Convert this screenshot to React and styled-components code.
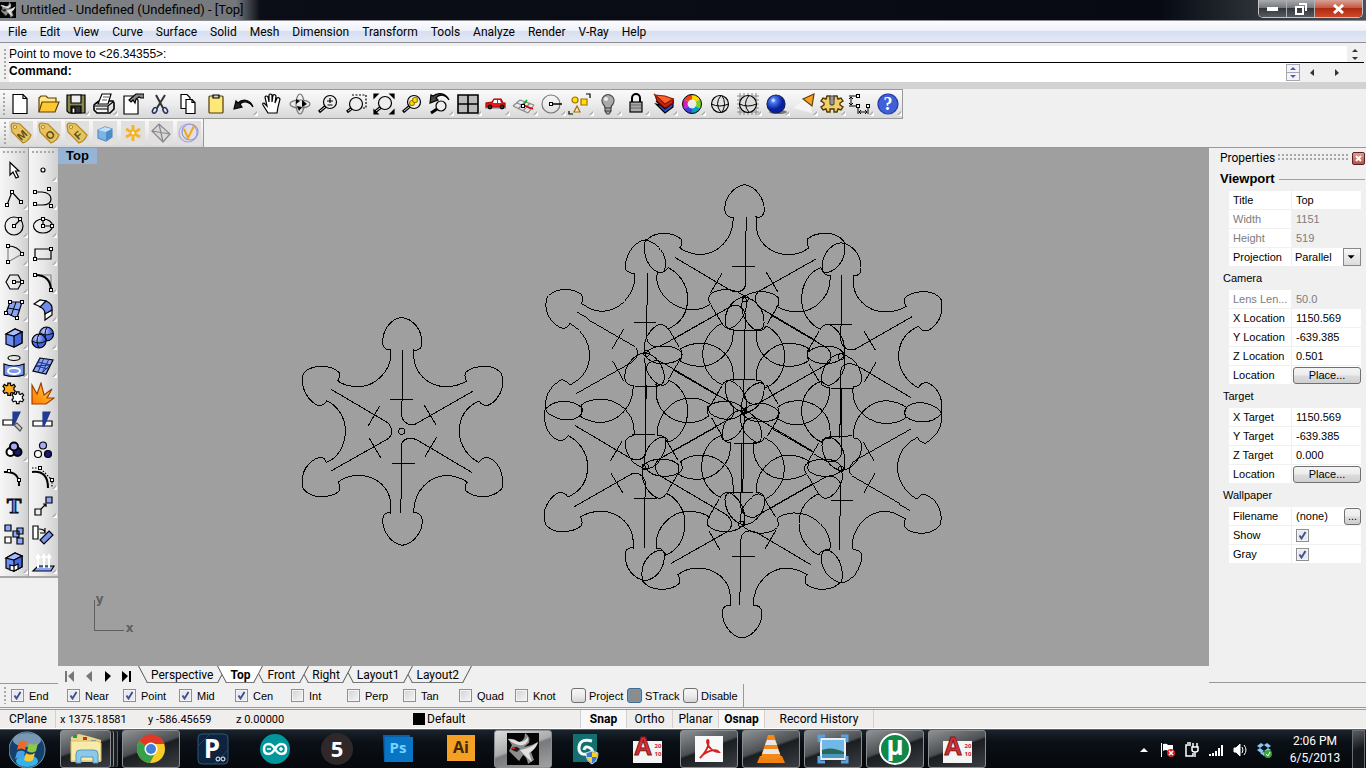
import React from "react";
import styled, { createGlobalStyle, css } from "styled-components";

const GlobalStyle = createGlobalStyle`
  * {
    box-sizing: border-box;
  }
  body {
    margin: 0;
    background: #f0f0f0;
    color: #000;
    font-family: Roboto, "Liberation Sans", sans-serif;
    font-size: 12px;
    line-height: 16px;
  }
  button,
  input,
  select {
    font: inherit;
    color: inherit;
    margin: 0;
    padding: 0;
    border: 0;
    background: none;
  }
`;

const Window = styled.div`
  display: flex;
  flex-direction: column;
  min-height: 100vh;
`;

/* ---------- title bar and menu ---------- */

const TitleBar = styled.header`
  display: flex;
  align-items: flex-start;
  justify-content: space-between;
  height: 21px;
  border-bottom: 1px solid #8d8d93;
  background: linear-gradient(90deg, #4b4e52 0, #0b0e16 260px, #070a12 85%, #2c3238 92%, #4a5056);
`;

const WindowTitle = styled.h1`
  display: flex;
  align-items: center;
  gap: 5px;
  height: 20px;
  margin: 0;
  padding-right: 16px;
  font-size: 13px;
  font-weight: 400;
  background: linear-gradient(90deg, #85888c, #75787b calc(100% - 24px), #0b0e1600);
  white-space: nowrap;
`;

const WindowButtons = styled.div`
  display: flex;
  height: 18px;
  margin-right: 3px;
  border: 1px solid #c4c4c8;
  border-top: 0;
  border-radius: 0 0 5px 5px;
  overflow: hidden;
`;

const WindowButton = styled.button`
  display: flex;
  align-items: center;
  justify-content: center;
  width: ${(p) => (p.$close ? "47px" : "28px")};
  border-right: ${(p) => (p.$close ? "0" : "1px solid #b0b0b4")};
  background: ${(p) =>
    p.$close
      ? "linear-gradient(#d8a196, #c45a45 45%, #b02a10 50%, #d0482a)"
      : "linear-gradient(#a9abae, #75787c 45%, #33373c 50%, #565b61)"};
`;

const Menu = styled.nav`
  display: flex;
  gap: 13px;
  height: 22px;
  padding: 3px 8px 0;
  border-bottom: 1px solid #8e8e94;
  background: linear-gradient(#fbfcfe, #eef1f9 45%, #d8dff0 50%, #e3e8f5);
  button {
    line-height: 16px;
    height: 16px;
  }
`;

/* ---------- command prompt ---------- */

const Grip = styled.span`
  flex: none;
  ${(p) =>
    p.$across
      ? css`
          height: ${p.$tall ? "8px" : "4px"};
          flex: 1;
        `
      : css`
          width: 3px;
          align-self: stretch;
          margin: 3px 2px 3px 4px;
        `}
  background: radial-gradient(circle at 1px 1px, #a8a8a8 1px, transparent 1px);
  background-size: 4px 4px;
`;

const CommandArea = styled.section`
  display: flex;
  padding-top: 3px;
  border-bottom: 7px solid #d2d2d2;
  font-family: "Liberation Sans", Arial, sans-serif;
`;

const CommandLines = styled.div`
  flex: 1;
  padding-right: 2px;
`;

const CommandHistory = styled.div`
  display: flex;
  justify-content: space-between;
  height: 17px;
  border-bottom: 1px solid #000;
  background: #fff;
`;

const CommandInput = styled.label`
  display: flex;
  height: 19px;
  background: #fff;
  font-weight: 700;
  input {
    flex: 1;
    outline: 0;
    font-weight: 400;
  }
`;

const ScrollBox = styled.span`
  display: flex;
  flex-direction: ${(p) => (p.$row ? "row" : "column")};
  align-items: center;
  justify-content: space-around;
  width: ${(p) => p.$width};
  background: #f0f0f0;
`;

const Spinner = styled.span`
  display: flex;
  flex-direction: column;
  width: 14px;
  margin: 1px 0;
  border: 1px solid #a6a6b0;
  svg {
    flex: 1;
    min-height: 0;
    background: #f4f4f8;
  }
  svg + svg {
    border-top: 1px solid #a6a6b0;
  }
`;

/* ---------- tool bars ---------- */

const ToolRow = styled.div`
  display: flex;
  height: ${(p) => (p.$small ? "29px" : "30px")};
  border-bottom: ${(p) => (p.$small ? "1px solid #999" : "0")};
`;

const ToolBar = styled.div`
  display: flex;
  border-top: ${(p) => (p.$small ? "0" : "1px solid #999")};
  border-bottom: ${(p) => (p.$small ? "0" : "1px solid #999")};
  border-right: 1px solid #999;
  background: linear-gradient(#fafafa, #ececec 50%, #d8d8d8);
  > ${Grip} {
    margin-left: ${(p) => (p.$small ? "4px" : "3px")};
    margin-right: 0;
  }
`;

const Tool = styled.button`
  position: relative;
  display: flex;
  align-items: center;
  justify-content: center;
  width: 28px;
  height: 28px;
  svg {
    display: block;
  }
  ${(p) =>
    p.$flyout &&
    css`
      &::after {
        content: "";
        position: absolute;
        right: 0;
        bottom: 2px;
        border: 2px solid transparent;
        border-right-color: #fff;
        border-bottom-color: #fff;
        filter: drop-shadow(-1px -1px 0 #aaa);
      }
    `}
  ${(p) =>
    p.$plate &&
    css`
      &::before {
        content: "";
        position: absolute;
        inset: 2px;
        background: #e2dfdf;
      }
      svg {
        position: relative;
      }
    `}
`;

/* ---------- main area ---------- */

const Main = styled.main`
  display: flex;
  flex: 1;
`;

const Side = styled.aside`
  display: flex;
  flex: none;
  align-items: flex-start;
  border-bottom: 1px solid #999;
`;

const Palette = styled.div`
  width: 29px;
  padding-top: 3px;
  border-bottom: 2px solid #a8a8a8;
  border-right: ${(p) => (p.$divider ? "1px solid #999" : "0")};
  background: linear-gradient(90deg, #f6f6f6, #e8e8e8 50%, #d0d0d0);
  ${Grip} {
    display: block;
    margin: 0 3px 1px;
  }
`;

const Centre = styled.div`
  display: flex;
  flex: 1;
  flex-direction: column;
  min-width: 0;
`;

const Viewport = styled.section`
  position: relative;
  flex: 1;
  min-height: 400px;
  background: #9f9f9f;
  > svg {
    display: block;
    width: 100%;
    height: 100%;
  }
`;

const ViewportName = styled.h2`
  position: absolute;
  top: 0;
  left: 0;
  margin: 0;
  padding: 0 8px;
  background: #98b4d4;
  font: 700 13px/16px "Liberation Sans", Arial, sans-serif;
`;

const Tabs = styled.div`
  display: flex;
  height: 18px;
  padding-left: 2px;
`;

const TabArrow = styled.button`
  width: 19px;
  height: 18px;
  svg {
    display: block;
    margin: 2px auto 0;
  }
`;

const TabList = styled.div`
  display: flex;
  padding-left: 2px;
`;

const Tab = styled.button`
  position: relative;
  z-index: ${(p) => p.$z};
  height: 17px;
  margin-right: -9px;
  padding: 0 13px;
  line-height: 16px;
  font-weight: ${(p) => (p.$active ? 700 : 400)};
  &::before,
  &::after {
    content: "";
    position: absolute;
    z-index: -1;
    top: 0;
    bottom: 0;
    background: ${(p) => (p.$active ? "#fff" : "#f0f0f0")};
    border-bottom: 1px solid #777;
  }
  &::before {
    left: 0;
    right: 45%;
    border-left: 1px solid #555;
    transform: skewX(28deg);
    transform-origin: top;
  }
  &::after {
    left: 45%;
    right: 0;
    border-right: 1px solid #555;
    transform: skewX(-28deg);
    transform-origin: top;
  }
`;

/* ---------- properties panel ---------- */

const Panel = styled.aside`
  flex: none;
  width: 157px;
  margin-bottom: 1px;
  padding: 0 1px 0 11px;
  border-bottom: 1px solid #999;
  font-family: "Liberation Sans", Arial, sans-serif;
  font-size: 11px;
`;

const PanelHeader = styled.div`
  display: flex;
  align-items: center;
  gap: 3px;
  height: 20px;
  font-size: 12px;
  font-family: Roboto, "Liberation Sans", sans-serif;
`;

const CloseButton = styled.button`
  width: 13px;
  height: 13px;
  border: 1px solid #5e2020;
  border-radius: 2px;
  background: linear-gradient(#dca090, #b85050);
  svg {
    display: block;
    margin: 2px auto;
  }
`;

const PanelTitle = styled.h2`
  display: flex;
  align-items: center;
  gap: 4px;
  margin: 0;
  height: 22px;
  font-size: 13px;
  &::after {
    content: "";
    flex: 1;
    height: 1px;
    background: #a0a0a0;
  }
`;

const Fields = styled.div`
  display: flex;
  flex-direction: column;
  gap: 1px;
  padding-top: 1px;
`;

const GroupName = styled.h3`
  margin: 0;
  height: 22px;
  padding-left: 3px;
  font-size: 11px;
  font-weight: 400;
  line-height: 22px;
`;

const Field = styled.div`
  display: grid;
  grid-template-columns: 62px 1fr;
  gap: 1px;
  height: 18px;
  margin: 0 4px 0 9px;
  line-height: 18px;
  color: ${(p) => (p.$off ? "#7c7c7c" : "#000")};
  > label {
    padding-left: 4px;
    background: #fff;
    white-space: nowrap;
  }
`;

const Value = styled.div`
  display: flex;
  align-items: center;
  min-width: 0;
  background: ${(p) => (p.$off ? "#f0f0f0" : "#fff")};
  > input[type="text"] {
    flex: 1;
    min-width: 0;
    width: 100%;
    height: 18px;
    padding-left: 4px;
    color: inherit;
  }
`;

const Projection = styled.div`
  position: relative;
  width: 100%;
  select {
    width: 100%;
    height: 18px;
    padding-left: 3px;
    appearance: none;
  }
  svg {
    position: absolute;
    top: 0;
    right: 0;
    pointer-events: none;
    border: 1px solid #888;
    background: linear-gradient(#f8f8f8, #dcdcdc);
  }
`;

const PushButton = styled.button`
  flex: ${(p) => (p.$small ? "0 0 17px" : "1")};
  height: 17px;
  margin-left: ${(p) => (p.$small ? "0" : "1px")};
  border: 1px solid #707070;
  border-radius: 3px;
  background: linear-gradient(#f4f4f4, #ececec 48%, #dcdcdc 52%, #cfcfcf);
  line-height: 14px;
`;

const Check = styled.input`
  flex: none;
  appearance: none;
  width: 13px;
  height: 13px;
  margin: ${(p) => (p.$inset ? "0 0 0 4px" : "0")};
  border: 1px solid #8e8f8f;
  background: linear-gradient(135deg, #cfd2d6, #f6f6f6);
  box-shadow: inset 0 0 0 1px #f4f4f4;
  &:checked {
    background: url("data:image/svg+xml,%3Csvg xmlns='http://www.w3.org/2000/svg' viewBox='0 0 11 11'%3E%3Cpath d='M2.5 5.5l2 3L8.500 2' fill='none' stroke='%23405090' stroke-width='1.900'/%3E%3C/svg%3E")
      #e8eaee;
  }
`;

/* ---------- osnap and status bars ---------- */

const Osnap = styled.div`
  display: flex;
  height: 24px;
  border-bottom: 1px solid #999;
  font-family: "Liberation Sans", Arial, sans-serif;
  font-size: 11px;
`;

const OsnapItems = styled.div`
  display: flex;
  padding-left: 2px;
  padding-right: 4px;
  border-right: 1px solid #999;
`;

const OsnapItem = styled.label`
  display: flex;
  align-items: center;
  gap: ${(p) => (p.$big ? "3px" : "5px")};
  width: 56px;
  white-space: nowrap;
`;

const PushCheck = styled.input`
  flex: none;
  appearance: none;
  width: 15px;
  height: 15px;
  border: 1px solid #707070;
  border-radius: 3px;
  background: linear-gradient(#f6f6f6, #ececec 50%, #d4d4d4);
  &:checked {
    border-color: #3c6a90;
    box-shadow: inset 0 0 0 1px #6c9cc0;
    background: #8c8c8c;
  }
`;

const Status = styled.footer`
  display: flex;
  height: 20px;
  margin-top: 1px;
  border-top: 1px solid #999;
  border-bottom: 1px solid #fff;
  background: #f0eded;
  line-height: 19px;
  white-space: nowrap;
`;

const StatusCell = styled.span`
  width: ${(p) => p.$width};
  padding-left: ${(p) => p.$pad || "0"};
  border-right: ${(p) => (p.$line ? "1px solid #d4d0d0" : "0")};
  font-size: ${(p) => (p.$digits ? "11px" : "12px")};
`;

const LayerCell = styled.span`
  display: flex;
  flex: none;
  align-items: center;
  gap: 2px;
  width: 168px;
  border-right: 1px solid #d4d0d0;
  &::before {
    content: "";
    width: 12px;
    height: 12px;
    background: #000;
  }
`;

const StatusButton = styled.button`
  width: ${(p) => (p.$wide ? "109px" : "46px")};
  border-right: 1px solid #d4d0d0;
  font-weight: ${(p) => (p.$on ? 700 : 400)};
  background: ${(p) => (p.$on ? "#f8f8f8" : "none")};
`;

/* ---------- task bar ---------- */

const TaskBar = styled.nav`
  display: flex;
  align-items: stretch;
  height: 40px;
  border-top: 1px solid #56626c;
  background: linear-gradient(#1a232c, #0a1016 12px, #05080c);
`;

const StartButton = styled.button`
  width: 56px;
  svg {
    display: block;
    margin: 0 auto;
  }
`;

const TaskButtons = styled.div`
  display: flex;
  flex: 1;
  gap: 4px;
  padding-left: 4px;
`;

const frames = {
  open: "linear-gradient(160deg, #8f9294, #4c5053 45%, #1a1e21 50%, #3a3e42)",
  active: "linear-gradient(160deg, #dcdddd, #a9abac 45%, #77797b 50%, #a0a2a4)",
};

const TaskButton = styled.button`
  display: flex;
  align-items: center;
  justify-content: center;
  width: 58px;
  height: 38px;
  border: 1px solid ${(p) => (p.$frame ? "#8a8e92" : "transparent")};
  border-radius: 3px;
  background: ${(p) => frames[p.$frame] || "none"};
  ${(p) =>
    p.$stack &&
    css`
      width: 51px;
      margin-right: 7px;
      box-shadow: 3px 0 0 -1px #1a1e21, 4px 0 0 -1px #8a8e92, 7px 0 0 -1px #1a1e21, 8px 0 0 -1px #5a5e62;
    `}
`;

const Tray = styled.div`
  display: flex;
  align-items: center;
  gap: 4px;
  color: #fff;
  button {
    width: 20px;
    height: 20px;
  }
  svg {
    display: block;
    margin: auto;
  }
`;

const Clock = styled.time`
  width: 74px;
  text-align: center;
  line-height: 17px;
  white-space: pre-line;
`;

const ShowDesktop = styled.button`
  width: 13px;
  margin-right: 1px;
  border: 1px solid #6a6e72;
  background: linear-gradient(160deg, #5a5e62, #14181c 50%);
`;

/* ---------- drawings ---------- */

const Svg = ({ size = 24, children }) => (
  <svg width={size} height={size} viewBox="0 0 24 24" fill="none" stroke="#000" strokeWidth="1.2" aria-hidden="true">
    {children}
  </svg>
);

const Nodes = ({ at }) =>
  at.map(([x, y]) => (
    <rect key={x + "-" + y} x={x - 1.5} y={y - 1.5} width="3" height="3" fill="#fff" stroke="#000" strokeWidth="1" shapeRendering="crispEdges" />
  ));

const Tag = ({ letter }) => (
  <Svg>
    <path d="M2 5Q2 2 5 2L11 3L22 14Q20 20 14 22L3 11Z" fill="#e8c25c" stroke="#b08a28" />
    <circle cx="6" cy="6" r="1.500" fill="#fff" stroke="#b08a28" />
    <text x="13" y="18" fontSize="11" fontWeight="700" fontFamily="Liberation Sans, sans-serif" textAnchor="middle" fill="#5c4c1c" stroke="none" transform="rotate(-42 13 14)">
      {letter}
    </text>
  </Svg>
);

const Glass = ({ x = 14, y = 10 }) => (
  <>
    <path d={`M${x - 4} ${y + 4}L3 20`} strokeWidth="3" />
    <path d={`M${x - 5} ${y + 5}L4 19`} stroke="#ddd" strokeWidth="1" />
    <circle cx={x} cy={y} r="6.500" fill="#eee" />
  </>
);

const gear =
  "M10 3h4v3l2 1 3-2 2 3-2 2v3l2 2-2 3-3-1-2 1v3h-4v-3l-2-1-3 1-2-3 2-2v-3l-2-2 2-3 3 2 2-1z";

const cog =
  "M7 4h3v3h4V4h3l1 3 3-1 2 3-3 2v2l3 2-2 3-3-1-1 3h-3v-3h-4v3H7l-1-3-3 1-2-3 3-2v-2L1 9l2-3 3 1z";

const Cube = () => (
  <>
    <path d="M4 8L13 3L20 6L20 17L12 21L4 18Z" fill="#6f8ff4" />
    <path d="M4 8L13 3L20 6L12 10Z" fill="#a9bcff" />
    <path d="M12 10V21L20 17V6Z" fill="#4668d8" />
  </>
);

const standardTools = [
  ["New", 0, <><path d="M5 2.500h10l4 4v15H5z" fill="#fff" /><path d="M15 2.500v4h4" /></>],
  ["Open", 0, <><path d="M3 20V6l2-2h5l2 2h8v4" fill="#ffe88a" stroke="#5c4000" /><path d="M3 20L6 10h17l-4 10z" fill="#ffc832" stroke="#5c4000" /></>],
  ["Save", 1, <><path d="M3 3h18v18H5l-2-2z" fill="#8a8650" /><path d="M7 3h10v8H7z" fill="#eee" /><path d="M7 14h10v7H7z" fill="#333" /><path d="M8 16h3v5H8z" fill="#fff" /></>],
  ["Print", 1, <><path d="M3 12l4-3h14l1 2v6l-4 4H5l-3-3v-5z" fill="#e4e4e4" strokeWidth="1.600" /><path d="M6 12l4-10h9l-3 10z" fill="#fff" /><path d="M11 5h6M10 8h5" stroke="#555" /><path d="M3 14h13l5-4M16 14v6M4 17h12" /><path d="M5 19h10" stroke="#fff" /></>],
  ["Document Properties", 0, <><path d="M4 4h9l5 4v14H4z" fill="#fff" /><path d="M9 8l7-6h8v4h-3l-2-1-3 2-1 4-2-3-2 2z" fill="#888" /></>],
  ["Cut", 0, <><path d="M8 3l7 13M17 3l-8 13" strokeWidth="2" stroke="#333" /><ellipse cx="7" cy="18.500" rx="2" ry="3" stroke="#203060" strokeWidth="1.500" transform="rotate(30 7 18)" /><ellipse cx="17" cy="18.500" rx="2" ry="3" stroke="#203060" strokeWidth="1.500" transform="rotate(-30 17 18)" /></>],
  ["Copy", 0, <><path d="M5 2.500h6l3 3v11H5z" fill="#fff" /><path d="M10 7.500h6l3 3v11h-9z" fill="#fff" /><path d="M16 7.500v3h3" /></>],
  ["Paste", 0, <><rect x="5" y="4" width="14" height="17" rx="1" fill="#ffe878" stroke="#4a3c10" /><path d="M9 6V3h6v3z" fill="#ccc" /></>],
  ["Undo", 1, <path d="M21 15C18 10 12 8 8 12L10 15L2 17L4 9L6 11C11 6 19 8 21 15Z" fill="#222" />],
  ["Pan", 0, <path d="M8 21L3 13Q2 11 4 11L7 14L5 5Q6 3 8 5L9 10V3Q10 1 12 3V10L13 3Q15 2 16 4L15 11L17 6Q19 5 20 7L18 15L17 21Z" fill="#fff" />],
  ["Rotate View", 0, <><ellipse cx="12" cy="12" rx="10" ry="4" stroke="#777" /><ellipse cx="12" cy="12" rx="4" ry="10" stroke="#777" /><path d="M8 7l4 2-4 3zM14 8l5 4-5 3zM9 14l5 1-3 4z" fill="#000" stroke="none" /></>],
  ["Zoom Dynamic", 0, <><Glass /><path d="M11 9h6M14 6v5M11.500 13h5" /></>],
  ["Zoom Window", 0, <><path d="M8 3h14v13h-5" strokeDasharray="2 1.500" /><Glass x={12} y={12} /></>],
  ["Zoom Extents", 0, <><Glass x={13} y={11} /><path d="M2 6V2h4zM18 2h4v4zM22 18v4h-4zM2 18v4h4z" fill="#000" /></>],
  ["Zoom Selected", 0, <><Glass /><circle cx="12" cy="11" r="2.500" fill="#ffe000" stroke="#a08000" /><circle cx="15" cy="8" r="2.500" fill="#ffe000" stroke="#a08000" /></>],
  ["Undo View", 1, <><path d="M9 17l-6 4" strokeWidth="3" /><circle cx="13" cy="14" r="5" fill="#eee" /><path d="M21 8C17 2 11 2 8 6L10 8L2 11L3 3L5 4C10 0 18 1 21 8Z" fill="#444" /></>],
  ["Four Viewports", 1, <><path d="M2 3h20v18H2z" fill="#bbb" strokeWidth="1.600" /><path d="M12 3v18M2 12h20" strokeWidth="1.600" /></>],
  ["Right View", 1, <><path d="M1 16h21" stroke="#888" /><path d="M2 15v-4l6-1 2-3h7l2 4h2v4z" fill="#e81818" stroke="#a00" /><path d="M10 8h3v3H9zM14 8h2l1 3h-3z" fill="#fff" stroke="none" /><circle cx="6" cy="15" r="1.800" fill="#333" /><circle cx="18" cy="15" r="1.800" fill="#333" /></>],
  ["CPlane", 1, <><path d="M8 8L22 13M5 11l14 6M1 14l15 7M8 8l-7 6M13 10l-7 7M18 11l-7 8M22 13l-6 8" stroke="#888" /><path d="M11 13l10 4" stroke="#d00" strokeWidth="1.600" /><path d="M11 13l4-5" stroke="#0a0" strokeWidth="1.600" /><Nodes at={[[11, 14]]} /></>],
  ["Circle", 1, <><circle cx="11" cy="12" r="9" stroke="#777" /><path d="M12 12h10" strokeWidth="1.500" /><Nodes at={[[11, 12]]} /></>],
  ["Object Snap", 1, <><circle cx="7" cy="8" r="3" fill="#ffe000" stroke="#a07000" /><path d="M13 7h6v6h-6z" fill="#ffe000" stroke="#a07000" /><path d="M9 14l3 6H6z" fill="#ffe8c8" stroke="#a07000" /><path d="M18 2h4v4M1 19v3h4" /></>],
  ["Lights", 1, <><path d="M9 16Q9 14 7 12A6 6 0 1 1 17 12Q15 14 15 16V19L13 22H11L9 19Z" fill="#aaa" stroke="#444" /><path d="M9 16h6M9 19h6" stroke="#333" /><circle cx="10" cy="7" r="2" fill="#eee" stroke="none" /></>],
  ["Lock", 1, <><path d="M8 11V6a4 4 0 0 1 8 0v5" strokeWidth="2" /><rect x="6" y="10" width="12" height="10" fill="#aaa" /><path d="M7 13h10M7 16h10" stroke="#666" /></>],
  ["Layers", 1, <><path d="M4 12l9 9 8-6V9l-8 5z" fill="#2850c8" /><path d="M4 9l9 8 8-6V8l-8 5z" fill="#fff" /><path d="M3 3l10 9 8-5v4l-8 5-8-7z" fill="#d82010" stroke="#701000" /><path d="M3 3l10 1 8 3-8 5z" fill="#ff6030" stroke="#902000" /></>],
  ["Colour", 1, <g strokeWidth="5"><path d="M12 5A7 7 0 0 1 18 8.500" stroke="#ffd800" /><path d="M18 8.500A7 7 0 0 1 18 15.500" stroke="#80d020" /><path d="M18 15.500A7 7 0 0 1 12 19" stroke="#00a0c0" /><path d="M12 19A7 7 0 0 1 6 15.500" stroke="#4040e0" /><path d="M6 15.500A7 7 0 0 1 6 8.500" stroke="#d020c0" /><path d="M6 8.500A7 7 0 0 1 12 5" stroke="#f04018" /><circle cx="12" cy="12" r="9.500" strokeWidth="1" /></g>],
  ["Shade", 0, <><circle cx="12" cy="12" r="8.500" fill="#e4e4e4" /><path d="M3.500 12q8 4 17 0M13 3.500q-7 8 0 17M14 3.500q5 8 0 17" strokeWidth="1" /></>],
  ["Mesh Shade", 1, <><path d="M1 4h22M1 8h22M1 12h22M1 16h22M1 20h22M4 1v22M8 1v22M12 1v22M16 1v22M20 1v22" stroke="#888" strokeWidth="1" /><circle cx="12" cy="12" r="8.500" fill="#ddd" /><path d="M3.500 12q8 4 17 0M13 3.500q-7 8 0 17" strokeWidth="1" /></>],
  ["Render", 1, <><ellipse cx="14" cy="20" rx="9" ry="2" fill="#777" stroke="none" /><circle cx="12" cy="12" r="9" fill="url(#blueBall)" stroke="#102060" /></>],
  ["Spotlight", 1, <><path d="M1 16L16 4L20 21Z" fill="#f4f4f4" stroke="none" /><path d="M11 7L22 2L20 14Z" fill="#f8a020" stroke="#604000" /></>],
  ["Options", 1, <><path d={cog} fill="#f4cc68" stroke="#503800" strokeWidth="1.400" /><path d="M10 4v8q2 2 4 0V4z" fill="#999" stroke="#555" /></>],
  ["Dimension", 1, <><path d="M1 4h9M1 14h9M3 5v8M1 7l2-2 2 2M1 11l2 2 2-2M10 14v8M20 14v8M11 20h8M13 18l-2 2 2 2M17 18l2 2-2 2" strokeWidth="1" /><Nodes at={[[10, 4], [10, 14], [20, 14]]} /></>],
  ["Help", 1, <><circle cx="12" cy="12" r="10" fill="#4060d8" stroke="#2038a0" /><text x="12" y="18" fontSize="18" fontWeight="700" fontFamily="Liberation Serif, serif" textAnchor="middle" fill="#fff" stroke="none">?</text></>],
];

const vrayTools = [
  ["V-Ray Materials", <Tag letter="M" />],
  ["V-Ray Options", <Tag letter="O" />],
  ["V-Ray Frame", <Tag letter="F" />],
  ["V-Ray Proxy", <Svg><path d="M5 9l7-3 7 2v8l-6 4-8-3z" fill="#7cb4e4" stroke="#5890c4" /><path d="M5 9l7-3 7 2-6 3z" fill="#c0e0f8" stroke="none" /><path d="M13 11v9l6-4V8z" fill="#4c8cc8" stroke="none" /></Svg>],
  ["V-Ray Sun", <Svg><path d="M12 4v16M5 8l14 8M19 8L5 16" stroke="#f4b428" strokeWidth="3" /><circle cx="12" cy="12" r="2" fill="#fff" stroke="#f4b428" /></Svg>],
  ["V-Ray Plane", <Svg><path d="M3 10L10 3L21 13L14 21ZM3 10L21 13M10 3L14 21" fill="#d8d8d8" stroke="#888" /></Svg>],
  ["V-Ray", <Svg><circle cx="11" cy="12" r="9" stroke="#a8a8e8" /><circle cx="13" cy="11" r="8" stroke="#9090e0" /><path d="M7 8l4 9 6-12" stroke="#f0a818" strokeWidth="2" /></Svg>],
];

const leftTools = [
  ["Select", 0, <path d="M8 4.500V17l3-3 3 6 2.500-1-3-6H17z" fill="#fff" />],
  ["Polyline", 1, <><path d="M5 19L10 6L19 16" /><Nodes at={[[5, 19], [10, 6], [19, 16]]} /></>],
  ["Circle", 1, <><circle cx="12" cy="12" r="9" /><path d="M12 12l6-6" /><Nodes at={[[12, 12], [18, 5]]} /></>],
  ["Arc", 1, <><path d="M6 4v16L20 12" stroke="#888" /><path d="M6 4Q16 4 20 12" /><Nodes at={[[6, 4], [20, 12], [6, 20]]} /></>],
  ["Polygon", 1, <><path d="M8 5h8l4 7-4 7H8l-4-7z" /><path d="M12 12h8" /><Nodes at={[[12, 12], [20, 12]]} /></>],
  ["Surface", 1, <><path d="M8 4h12l-5 16-11-5z" fill="#8aa4f4" /><path d="M14 4L9 18M6 10l11 2" strokeWidth="1" /><Nodes at={[[8, 4], [20, 4], [4, 15], [15, 20]]} /></>],
  ["Box", 1, <Cube />],
  ["Project", 1, <><ellipse cx="12" cy="4" rx="6" ry="2.500" /><path d="M2 10q10 4 20 0v11q-10 3-20 0z" fill="#7c98f0" /><ellipse cx="12" cy="17" rx="6" ry="3" stroke="#fff" strokeWidth="2" /></>],
  ["Join", 0, <><g transform="translate(-1 -1) scale(.68)"><path d={gear} fill="#ffa818" strokeWidth="1.800" /></g><g transform="translate(8 8) scale(.65)"><path d={gear} fill="#fff" strokeWidth="1.800" /></g></>],
  ["Trim", 0, <><path d="M1 10h10v5H1z" fill="#fff" /><path d="M11 2h7L12 15h-1z" fill="#203c90" stroke="#203c90" /><path d="M12 15l3-2 5 5-2 3z" fill="#ccc" stroke="#555" /></>],
  ["Group", 1, <g strokeWidth="2"><circle cx="8.500" cy="14" r="4" fill="#fff" /><circle cx="15.500" cy="14" r="4" fill="#181878" /><circle cx="12" cy="8.500" r="4" fill="#a8a8ff" /></g>],
  ["Edit Curve", 0, <><path d="M2 6Q18 5 17 20" strokeWidth="2" /><Nodes at={[[7, 5], [17, 14]]} /></>],
  ["Text", 0, <text x="12" y="19" fontSize="22" fontWeight="700" fontFamily="Liberation Serif, serif" textAnchor="middle" fill="#6484e8" strokeWidth="1">T</text>],
  ["Block", 0, <g fill="#8ca8f8"><path d="M3 3h6v6H3zM15 6h6v6h-6zM11 9h6v6h-6zM15 16h6v6h-6z" /><path d="M3 15h6v6H3z" fill="#fff" /></g>],
  ["Boolean", 1, <><Cube /><path d="M8 15l4 1v5l-4-1zM12 16l4-2v5l-4 2z" fill="#fff" /></>],
];

const rightTools = [
  ["Point", 1, <circle cx="12" cy="12" r="2" fill="#fff" />],
  ["Curve", 1, <><path d="M4 6h7q9 1 9 7t-9 6H4" /><Nodes at={[[4, 6], [18, 3], [4, 18], [20, 20]]} /></>],
  ["Ellipse", 1, <><ellipse cx="12" cy="12" rx="9.500" ry="7" /><path d="M12 5v7h9" /><Nodes at={[[12, 5], [12, 12], [21, 12]]} /></>],
  ["Rectangle", 1, <><path d="M4 7h16v10H4z" /><Nodes at={[[20, 7], [4, 17]]} /></>],
  ["Fillet", 1, <><path d="M4 5h16v16" stroke="#888" /><path d="M4 5q16 0 16 16" strokeWidth="2" /><Nodes at={[[4, 5], [20, 20]]} /></>],
  ["Fillet Surface", 1, <><path d="M3 6l6-4 6 1-5 6z" fill="#fff" /><path d="M14 15l7-3v5l-7 5z" fill="#fff" /><path d="M9 9l6-6q7 3 6 9l-7 4q0-5-5-7z" fill="#6c8cf0" /></>],
  ["Solids", 1, <><circle cx="15.500" cy="8" r="7" fill="url(#softBall)" /><circle cx="8" cy="15" r="7" fill="url(#softBall)" /><path d="M1 15q7 4 14 0M8 8q-4 7 0 14M9 7q6 4 13 0M16 1q-4 7 0 14" strokeWidth="1" /></>],
  ["Mesh", 1, <><path d="M9 4l13 2-7 14-13-3z" fill="#88a4f4" /><path d="M13 4L7 18M18 5l-7 14M7 8l12 3M5 12l12 3M9 4l-4 8 14-1-8 8" stroke="#203080" strokeWidth="1" /></>],
  ["Explode", 0, <path d="M1 22V3l5 9 4-11 3 12 8-6-5 9h7l-8 6z" fill="url(#fire)" stroke="#a04000" />],
  ["Split", 0, <><path d="M2 11h19v5H2z" fill="#fff" /><path d="M12 2h7l-6 14h-1z" fill="#203c90" stroke="#203c90" /></>],
  ["Ungroup", 0, <><circle cx="12" cy="7.500" r="3.500" fill="#a8a8ff" /><circle cx="7" cy="16" r="3.500" fill="#fff" /><circle cx="17" cy="16" r="3.500" fill="#181878" /></>],
  ["Control Points", 1, <><path d="M1 6q16-2 16 16" strokeWidth="2" /><path d="M1 2h8l12 12v8" strokeDasharray="1.500 1.500" /><Nodes at={[[9, 2], [21, 14]]} /></>],
  ["Scale", 1, <><path d="M4 15h6v6H4z" fill="#eee" /><path d="M15 3h6v6h-6z" fill="#8ca8f8" /><path d="M10 15l5-5M12 10h3v3" /></>],
  ["Orient", 0, <><path d="M2 4h5v13H2z" fill="#fff" /><path d="M8 7q5 0 6 3M14 6v5h-5" /><path d="M18 9l4 4-9 9-4-4z" fill="#7894f0" /></>],
  ["Extrude", 1, <><path d="M2 21l5-5h16l-3 5z" fill="#88a4f4" /><path d="M7 18V7M13 18V7M18 18V7M5 8l2-3 2 3M11 8l2-3 2 3M16 8l2-3 2 3" stroke="#fff" strokeWidth="2" /></>],
];

/* One six-armed star, centred on 0,0 and drawn at three units per pixel */
const outline = `M-33-229V-245H-42Q-57-250-57-266C-57-304-35-336 0-342C37-336 60-304 60-269
C61-250 54-243 40-243L36-245V-229C36-179 75-134 135-134C165-134 180-142 195-151
C189-160 189-170 192-177C205-189 225-195 250-195C275-195 290-186 300-172C303-159 303-149 302-132
C295-104 275-82 255-77C243-77 237-84 232-91C195-74 173-44 173 0C173 46 205 81 232 93
C237 84 245 78 257 78C280 84 300 111 302 141Q304 164 300 173C285 188 265 196 245 196
C225 196 205 189 193 179Q189 160 197 152C175 138 160 133 135 132C85 134 36 176 36 244
C50 243 61 251 61 264C65 296 40 336 2 342C-35 336-58 296-57 264C-56 251-48 244-36 244L-32 246
L-33 221C-33 166-80 132-132 132C-160 133-175 140-190 152C-186 159-185 171-187 179
C-200 191-220 196-240 196C-265 196-285 186-296 171C-299 156-298 136-295 126
C-287 101-265 81-243 78Q-231 78-227 93C-190 81-169 41-169-2C-169-44-195-79-225-92
C-230-82-238-77-247-77C-270-82-295-114-297-144Q-299-166-293-176C-280-189-260-195-240-195
C-220-195-200-189-188-177Q-185-156-192-151C-175-139-155-134-128-134C-75-136-33-184-33-229`;

const ribs = `M2-244V-92M-1-92V-49C2-32 15-20 30-20L40-21L213-120M-212-126L-45-28C-35-20-30-14-30 0
C-30 11-35 18-42 23L-212 119M210 123L50 28C25 14 0 21-1 46V203L-4 204V244
M-35-96H34M68-78L103-20M-66-76L-100-17M-97 21L-63 79M105 17L70 76M-29 96H40`;

const Star = ({ x, y, turn = 0 }) => (
  <g transform={`translate(${x} ${y}) rotate(${turn})`}>
    <path d={outline} vectorEffect="non-scaling-stroke" />
    <path d={ribs} vectorEffect="non-scaling-stroke" />
    <circle r="9" vectorEffect="non-scaling-stroke" />
  </g>
);

const stars = [
  { x: 1031, y: 850 },
  { x: 2062, y: 452, turn: 180 },
  { x: 1765, y: 617, turn: 120 },
  { x: 2349, y: 626 },
  { x: 2058, y: 789 },
  { x: 1762, y: 956, turn: 180 },
  { x: 2348, y: 963, turn: -60 },
  { x: 2050, y: 1128 },
];

const Arrow = ({ d, w = 7, h = 7, fill = "#333" }) => (
  <svg width={w} height={h} viewBox={`0 0 ${w} ${h}`} fill={fill} aria-hidden="true">
    <path d={d} />
  </svg>
);

const Rhino = ({ size }) => (
  <svg width={size} height={size} viewBox="0 0 32 32" aria-hidden="true">
    <path d="M0 0h32v32H0z" fill="#050505" />
    <path d="M1 6Q7 5 12 9Q18 8 18 0Q24 4 22 10L17 14Q24 13 31 9Q29 15 24 19L27 27L21 31Q20 24 16 22L12 28L2 18L5 12Z" fill="#8c8c8c" />
    <path d="M1 6Q7 6 12 9Q18 9 21 4Q22 10 16 12Q8 13 1 6ZM13 17Q24 15 31 9Q29 16 22 20L25 29Q19 24 13 17Z" fill="#e0e0e0" />
    <path d="M6 14q4-1 7 2l-3 3q-4-1-6-3z" fill="#1c1c1c" />
    <path d="M5 15h3" stroke="#d02020" strokeWidth="2" />
  </svg>
);

const Logo = ({ children }) => (
  <svg width="34" height="34" viewBox="0 0 34 34" fill="none" aria-hidden="true">
    {children}
  </svg>
);

const LogoText = ({ x, y, size, fill, children }) => (
  <text x={x} y={y} fontSize={size} fontWeight="700" fontFamily="Open Sans, Liberation Sans, sans-serif" textAnchor="middle" fill={fill}>
    {children}
  </text>
);

const AutoCad = () => (
  <Logo>
    <path d="M3 9h29v22H3z" fill="#f4f4f4" />
    <text x="13" y="23" fontSize="25" fontWeight="700" fontFamily="Liberation Sans, sans-serif" textAnchor="middle" fill="#d83038" stroke="#801820">
      A
    </text>
    <LogoText x="28" y="16" size="6" fill="#d02028">20</LogoText>
    <LogoText x="28" y="24" size="6" fill="#d02028">10</LogoText>
  </Logo>
);

const taskItems = [
  ["Explorer", "open", <Logo><path d="M2 5l8-3 12 3 10 3v22H2z" fill="#ecd68a" /><path d="M4 3h4v3H4z" fill="#20a040" /><path d="M14 5h4v3h-4z" fill="#d03020" /><path d="M22 8h5v3h-5z" fill="#3080d0" /><path d="M2 9h26l4 2v18H2z" fill="#f8eaa8" stroke="#d8bc68" /><path d="M7 31v-9q0-4 4-4h14q4 0 4 4v9h-5v-6H12v6z" fill="#8cc8e8" stroke="#5898c0" /></Logo>],
  ["Chrome", "open", <Logo><circle cx="17" cy="17" r="14" fill="#f8cc28" /><path d="M17 17L5 9.500A14 14 0 0 1 30.500 12H17Z" fill="#e03828" /><path d="M17 17L5 9.500A14 14 0 0 0 16 31L22 19Z" fill="#38a048" /><circle cx="17" cy="17" r="6.500" fill="#fff" /><circle cx="17" cy="17" r="5" fill="#4080d8" /></Logo>],
  ["Processing", "", <Logo><rect x="2" y="2" width="30" height="30" rx="4" fill="#0c2440" stroke="#2c5878" /><path d="M2 14l12-12M18 32L32 18" stroke="#1c4468" /><LogoText x="16" y="26" size="26" fill="#fff">P</LogoText><circle cx="22" cy="27" r="2" stroke="#fff" /><circle cx="27" cy="27" r="2" stroke="#fff" /></Logo>],
  ["Arduino", "", <Logo><circle cx="17" cy="17" r="15" fill="#00979c" /><path d="M17 17C13 10 6 11 6 17S13 24 17 17S28 11 28 17S21 24 17 17" stroke="#fff" strokeWidth="2.500" /><path d="M9 17h4M21 17h4M23 15v4" stroke="#fff" strokeWidth="1.500" /></Logo>],
  ["Five", "", <Logo><circle cx="17" cy="17" r="16" fill="#302828" /><LogoText x="17" y="25" size="22" fill="#fff">5</LogoText></Logo>],
  ["Photoshop", "", <Logo><path d="M1 3h27v3h3v24H2z" fill="#0860a8" /><path d="M3 5h28v25H3z" fill="#0874c4" /><LogoText x="16" y="21" size="15" fill="#74d4ff">Ps</LogoText></Logo>],
  ["Illustrator", "", <Logo><path d="M3 3h28v26H3z" fill="#f4a024" /><LogoText x="17" y="21" size="16" fill="#402810">Ai</LogoText></Logo>],
  ["Rhinoceros", "active", <Rhino size={32} />],
  ["3ds Max", "", <Logo><path d="M5 2h24v28H5z" fill="#147070" /><path d="M24 9q-12-3-13 6t10 7q6-3 1-6t-6 2" stroke="#f4ffff" strokeWidth="3" /><path d="M18 21l6-2 6 2q0 8-6 11q-6-3-6-11z" fill="#3878d0" stroke="#ddd" /><path d="M24 20l5 1v4h-5zM24 25v6q-4-2-5-6z" fill="#f8d030" /></Logo>],
  ["AutoCAD", "", <AutoCad />],
  ["Adobe Reader", "open", <Logo><path d="M3 4h28v26H3z" fill="#f8f8f8" /><path d="M8 26C18 16 17 8 16 8C13 8 17 20 27 20C24 16 13 19 8 26Z" stroke="#d82020" strokeWidth="1.800" /></Logo>],
  ["VLC", "open", <Logo><path d="M6 24h22l3 7H3z" fill="#f08010" /><path d="M14 3h6l7 22q-10 5-20 0z" fill="#f48818" /><path d="M13 8h8l2 5H11zM10 17h14l2 5H8z" fill="#e8e8e8" /></Logo>],
  ["Pictures", "open", <Logo><path d="M4 6h26v22H4z" fill="#e8eef2" /><path d="M6 8h22v18H6z" fill="#70b8e8" /><path d="M6 18q9-4 22 2v6H6z" fill="#286858" /><path d="M6 22h22v4H6z" fill="#4898c0" /><path d="M3 10V4h6M25 4h6v6M31 24v6h-6M9 30H3v-6" stroke="#58a0e0" strokeWidth="3" /></Logo>],
  ["uTorrent", "open", <Logo><circle cx="17" cy="17" r="15" fill="#108848" stroke="#fff" strokeWidth="2" /><LogoText x="17" y="23" size="26" fill="#fff">µ</LogoText></Logo>],
  ["AutoCAD 2010", "open", <AutoCad />],
];

/* ---------- page data ---------- */

const menuItems = ["File", "Edit", "View", "Curve", "Surface", "Solid", "Mesh", "Dimension", "Transform", "Tools", "Analyze", "Render", "V-Ray", "Help"];
const layoutTabs = ["Perspective", "Top", "Front", "Right", "Layout1", "Layout2"];
const snaps = ["End", "Near", "Point", "Mid", "Cen", "Int", "Perp", "Tan", "Quad", "Knot"];

const TextField = ({ label, value, off }) => {
  const id = React.useId();
  return (
    <Field $off={off}>
      <label htmlFor={id}>{label}</label>
      <Value $off={off}>
        <input id={id} type="text" defaultValue={value} disabled={off} />
      </Value>
    </Field>
  );
};

const PlaceField = () => {
  const id = React.useId();
  return (
    <Field>
      <label htmlFor={id}>Location</label>
      <Value>
        <PushButton id={id}>Place...</PushButton>
      </Value>
    </Field>
  );
};

const CheckField = ({ label }) => {
  const id = React.useId();
  return (
    <Field>
      <label htmlFor={id}>{label}</label>
      <Value>
        <Check id={id} type="checkbox" $inset defaultChecked />
      </Value>
    </Field>
  );
};

const Properties = () => (
  <Panel>
    <PanelHeader>
      Properties
      <Grip $across $tall />
      <CloseButton aria-label="Close panel">
        <svg width="7" height="7" viewBox="0 0 7 7" stroke="#fff" strokeWidth="2">
          <path d="M1 1l5 5M6 1L1 6" />
        </svg>
      </CloseButton>
    </PanelHeader>
    <PanelTitle>Viewport</PanelTitle>
    <Fields>
      <TextField label="Title" value="Top" />
      <TextField label="Width" value="1151" off />
      <TextField label="Height" value="519" off />
      <Field>
        <label htmlFor="projection">Projection</label>
        <Value>
          <Projection>
            <select id="projection" defaultValue="Parallel">
              <option>Parallel</option>
              <option>Perspective</option>
            </select>
            <Arrow d="M4 7h8L8 11z" w={18} h={18} fill="#000" />
          </Projection>
        </Value>
      </Field>
      <GroupName>Camera</GroupName>
      <TextField label="Lens Len..." value="50.0" off />
      <TextField label="X Location" value="1150.569" />
      <TextField label="Y Location" value="-639.385" />
      <TextField label="Z Location" value="0.501" />
      <PlaceField />
      <GroupName>Target</GroupName>
      <TextField label="X Target" value="1150.569" />
      <TextField label="Y Target" value="-639.385" />
      <TextField label="Z Target" value="0.000" />
      <PlaceField />
      <GroupName>Wallpaper</GroupName>
      <Field>
        <label htmlFor="filename">Filename</label>
        <Value>
          <input id="filename" type="text" defaultValue="(none)" />
          <PushButton $small aria-label="Browse">...</PushButton>
        </Value>
      </Field>
      <CheckField label="Show" />
      <CheckField label="Gray" />
    </Fields>
  </Panel>
);

function App() {
  return (
    <Window>
      <GlobalStyle />
      <TitleBar>
        <WindowTitle>
          <Rhino size={16} />
          Untitled - Undefined (Undefined) - [Top]
        </WindowTitle>
        <WindowButtons>
          <WindowButton aria-label="Minimize">
            <Arrow d="M0 4h11v4H0z" w={11} h={12} fill="#fff" />
          </WindowButton>
          <WindowButton aria-label="Restore">
            <svg width="12" height="12" viewBox="0 0 12 12" fill="none" stroke="#fff" strokeWidth="2">
              <path d="M1 4h7v7H1zM4 1h7v7" />
            </svg>
          </WindowButton>
          <WindowButton $close aria-label="Close">
            <svg width="11" height="10" viewBox="0 0 11 10" stroke="#fff" strokeWidth="3">
              <path d="M1 1l9 8M10 1L1 9" />
            </svg>
          </WindowButton>
        </WindowButtons>
      </TitleBar>
      <Menu>
        {menuItems.map((name) => (
          <button key={name}>{name}</button>
        ))}
      </Menu>

      <CommandArea>
        <Grip />
        <CommandLines>
          <CommandHistory>
            Point to move to &lt;26.34355&gt;:
            <ScrollBox $width="17px">
              <Arrow d="M0 4l3-3 3 3z" h={5} />
              <Arrow d="M0 1h6L3 4z" h={5} />
            </ScrollBox>
          </CommandHistory>
          <CommandInput>
            Command:
            <input type="text" />
            <Spinner>
              <Arrow d="M3 5l3-3 3 3z" w={12} h={7} fill="#4860c0" />
              <Arrow d="M3 2h6L6 5z" w={12} h={7} fill="#4860c0" />
            </Spinner>
            <ScrollBox $row $width="48px">
              <Arrow d="M5 0v7L1 4z" />
              <Arrow d="M2 0v7l4-3z" />
            </ScrollBox>
            <ScrollBox $width="16px" />
          </CommandInput>
        </CommandLines>
      </CommandArea>

      <ToolRow>
        <ToolBar>
          <Grip />
          {standardTools.map(([name, flyout, art]) => (
            <Tool key={name} aria-label={name} $flyout={flyout}>
              <Svg>{art}</Svg>
            </Tool>
          ))}
        </ToolBar>
      </ToolRow>
      <ToolRow $small>
        <ToolBar $small>
          <Grip />
          {vrayTools.map(([name, art]) => (
            <Tool key={name} aria-label={name} $plate>
              {art}
            </Tool>
          ))}
        </ToolBar>
      </ToolRow>

      <Main>
        <Side>
          {[leftTools, rightTools].map((tools, i) => (
            <Palette key={i} $divider={i === 0}>
              <Grip $across />
              {tools.map(([name, flyout, art]) => (
                <Tool key={name} aria-label={name} $flyout={flyout}>
                  <Svg>{art}</Svg>
                </Tool>
              ))}
            </Palette>
          ))}
        </Side>
        <Centre>
          <Viewport>
            <ViewportName>Top</ViewportName>
            <svg viewBox="0 0 3453 1554" fill="none" stroke="#000" shapeRendering="crispEdges">
              <defs>
                <radialGradient id="blueBall" cx=".35" cy=".3">
                  <stop offset="0" stopColor="#fff" />
                  <stop offset=".3" stopColor="#4878f0" />
                  <stop offset="1" stopColor="#0820a0" />
                </radialGradient>
                <radialGradient id="softBall" cx=".35" cy=".3">
                  <stop offset="0" stopColor="#c0d0ff" />
                  <stop offset="1" stopColor="#4464e0" />
                </radialGradient>
                <linearGradient id="fire" x1="0" y1="1" x2="1" y2="0">
                  <stop offset="0" stopColor="#ff7800" />
                  <stop offset="1" stopColor="#ffd840" />
                </linearGradient>
              </defs>
              {stars.map((star) => (
                <Star key={star.x} {...star} />
              ))}
              <path d="M110 1356V1446H198" stroke="#606060" vectorEffect="non-scaling-stroke" />
              <g fill="#606060" stroke="none" fontFamily="DejaVu Sans, sans-serif" fontWeight="700" fontSize="36">
                <text x="113" y="1366">y</text>
                <text x="203" y="1452">x</text>
              </g>
            </svg>
          </Viewport>
          <Tabs>
            <TabArrow aria-label="First">
              <Arrow d="M0 1h2v11H0zM9 1v11L3 6z" w={10} h={13} fill="#777" />
            </TabArrow>
            <TabArrow aria-label="Previous">
              <Arrow d="M8 1v11L2 6z" w={10} h={13} fill="#777" />
            </TabArrow>
            <TabArrow aria-label="Next">
              <Arrow d="M2 1v11l6-6z" w={10} h={13} fill="#000" />
            </TabArrow>
            <TabArrow aria-label="Last">
              <Arrow d="M0 1v11l6-6zM7 1h2v11H7z" w={10} h={13} fill="#000" />
            </TabArrow>
            <TabList>
              {layoutTabs.map((name, i) => (
                <Tab key={name} $active={name === "Top"} $z={name === "Top" ? 10 : 8 - i}>
                  {name}
                </Tab>
              ))}
            </TabList>
          </Tabs>
        </Centre>
        <Properties />
      </Main>

      <Osnap>
        <Grip />
        <OsnapItems>
          {snaps.map((name, i) => (
            <OsnapItem key={name}>
              <Check type="checkbox" defaultChecked={i < 5} />
              {name}
            </OsnapItem>
          ))}
          {["Project", "STrack", "Disable"].map((name) => (
            <OsnapItem key={name} $big>
              <PushCheck type="checkbox" defaultChecked={name === "STrack"} />
              {name}
            </OsnapItem>
          ))}
        </OsnapItems>
      </Osnap>

      <Status>
        <StatusCell $width="56px" $pad="9px" $line>CPlane</StatusCell>
        <StatusCell $width="92px" $pad="4px" $digits>x 1375.18581</StatusCell>
        <StatusCell $width="88px" $digits>y -586.45659</StatusCell>
        <StatusCell $width="177px" $digits>z 0.00000</StatusCell>
        <LayerCell>Default</LayerCell>
        <StatusButton $on>Snap</StatusButton>
        <StatusButton>Ortho</StatusButton>
        <StatusButton>Planar</StatusButton>
        <StatusButton $on>Osnap</StatusButton>
        <StatusButton $wide>Record History</StatusButton>
      </Status>

      <TaskBar>
        <StartButton aria-label="Start">
          <svg width="38" height="38" viewBox="0 0 38 38">
            <circle cx="18" cy="19" r="18" fill="#16406c" stroke="#7898b0" />
            <ellipse cx="18" cy="30" rx="11" ry="6" fill="#38b0e8" />
            <ellipse cx="18" cy="9" rx="14" ry="7" fill="#7898b4" />
            <path d="M10 11q4-3 8 0l-2 8q-4-3-8 0z" fill="#f06828" />
            <path d="M20 12q4 3 9 0l-2 8q-4 3-9 0z" fill="#90c840" />
            <path d="M8 21q4-3 8 0l-2 7q-4-3-8 0z" fill="#48a0e8" />
            <path d="M17 22q4 3 9 0l-2 7q-4 3-9 0z" fill="#fcc830" />
          </svg>
        </StartButton>
        <TaskButtons>
          {taskItems.map(([name, frame, art], i) => (
            <TaskButton key={name} aria-label={name} $frame={frame} $stack={i === 0}>
              {art}
            </TaskButton>
          ))}
        </TaskButtons>
        <Tray>
          <button aria-label="Show hidden icons">
            <Arrow d="M0 5l4-4 4 4z" w={8} h={6} fill="#fff" />
          </button>
          <button aria-label="Action Center">
            <svg width="16" height="16" viewBox="0 0 16 16" fill="#fff">
              <path d="M1 1h1v14H1zM3 2q4-1 5 1h5v6H8Q6 7 3 9z" />
              <circle cx="11" cy="11" r="4" fill="#d82020" />
              <path d="M9 9l4 4M13 9l-4 4" stroke="#fff" strokeWidth="1.500" />
            </svg>
          </button>
          <button aria-label="Power">
            <svg width="16" height="16" viewBox="0 0 16 16" fill="none" stroke="#fff" strokeWidth="1.500">
              <path d="M7 3H2v11h7v-3M3 1h4" />
              <path d="M8 5h6v3q0 2-3 2t-3-2zM9 1v4M13 1v4M11 10v5" />
            </svg>
          </button>
          <button aria-label="Network">
            <svg width="16" height="16" viewBox="0 0 16 16" fill="#fff">
              <path d="M1 12h2v2H1zM4 11h2v3H4zM7 9h2v5H7zM10 6h2v8h-2zM13 3h2v11h-2z" />
            </svg>
          </button>
          <button aria-label="Volume">
            <svg width="16" height="16" viewBox="0 0 16 16" fill="none" stroke="#fff">
              <path d="M2 6h2l4-4v12l-4-4H2z" fill="#fff" />
              <path d="M10 5q2 3 0 6M12 3q4 5 0 10" />
            </svg>
          </button>
          <button aria-label="Dropbox">
            <svg width="16" height="16" viewBox="0 0 16 16" fill="#88c8f8">
              <path d="M5 1l3 2-4 3-3-2zM11 1l4 3-3 2-4-3zM4 6l4 3-3 2-4-3zM12 6l3 2-4 3-3-2zM8 10l3 2-3 2-4-3z" />
              <circle cx="12" cy="12" r="4" fill="#38a838" />
              <path d="M10 12l2 2 2-4" fill="none" stroke="#fff" />
            </svg>
          </button>
          <Clock>{"2:06 PM\n6/5/2013"}</Clock>
        </Tray>
        <ShowDesktop aria-label="Show desktop" />
      </TaskBar>
    </Window>
  );
}

export default App;
